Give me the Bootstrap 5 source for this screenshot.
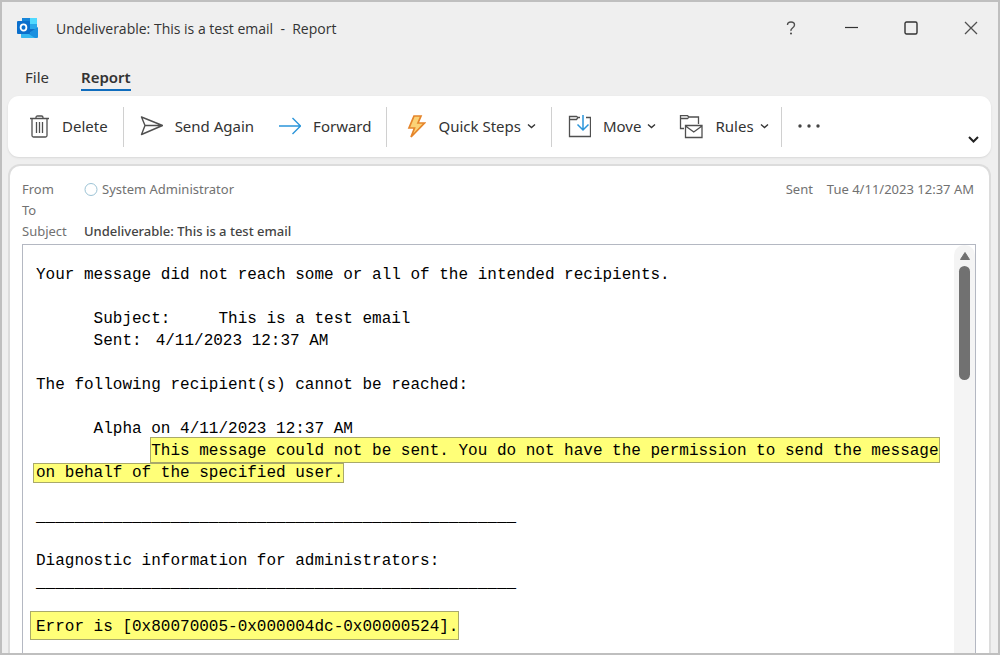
<!DOCTYPE html>
<html lang="en">
<head>
<meta charset="utf-8">
<meta name="viewport" content="width=device-width, initial-scale=1">
<title>Undeliverable: This is a test email - Report</title>
<link href="https://cdn.jsdelivr.net/npm/bootstrap@5.3.0/dist/css/bootstrap.min.css" rel="stylesheet">
<style>
body { font-family: "Noto Sans", "Open Sans", sans-serif; font-size: 15px; color: #333; background: #efefef; }
button { border: 0; background: none; padding: 0; color: inherit; white-space: nowrap; }
svg { display: block; flex: none; fill: none; stroke: #505050; }
.app-window { border: 2px solid #bfbfbf; height: 100vh; min-height: 400px; overflow: hidden; }
.title-bar { height: 52px; padding: 0 11px 0 15px; }
.title-text { font-family: "Open Sans", sans-serif; font-size: 14px; white-space: pre; padding-left: 17px; }
.win-btns { margin-right: -14px; }
.win-btn { width: 60px; height: 40px; }
.menu-tabs { height: 42px; padding: 10px 23px 0; gap: 32px; }
.menu-tabs a { color: #333; text-decoration: none; height: 27px; line-height: 26px; }
.menu-tabs a.current { border-bottom: 2px solid #0f6cbd; font-weight: 600; }
.ribbon { background: #fff; border-radius: 11px; height: 61px; margin: 0 7px 0 6px; padding: 0 11px 0 5px; box-shadow: 0 1px 2px #d8d8d8; }
.ribbon button { height: 40px; margin: 0 15px; gap: 12px; }
.ribbon button + button { margin-left: 8px; }
.ribbon .divider { width: 1px; height: 40px; background: #d0d0d0; flex: none; }
.ribbon .divider:last-of-type { margin-left: -3px; }
.ribbon .expand { height: 24px; margin: 24px 0 0 auto; }
.caret { margin-left: -6px; }
.report { background: #fff; border: 2px solid #dcdcdc; border-bottom: 0; border-radius: 12px 12px 0 0; margin: 7px 7px 0 6px; padding: 13px 13px 0 12px; min-height: 0; }
.headers { font-size: 13px; line-height: 21px; color: #717171; margin: 0 0 2px; }
.headers dt { width: 62px; font-weight: 400; }
.headers dd { margin: 0; }
.headers .topic { color: #444; font-weight: 500; }
.sent-date { margin: 0 2px 0 14px; }
.message-box { border: 1px solid #b4b8c2; border-bottom: 0; min-height: 0; }
.message { font-family: "Liberation Mono", monospace; font-size: 16px; line-height: 22px; color: #000; margin: 0; padding: 19px 0 0 13px; overflow: hidden; tab-size: 6; min-width: 0; }
.message .field-name { margin-right: 14px; }
.hl { background: #ffff78; box-shadow: 0 0 0 1px #a9a96a; padding: 4px 0 2px; }
.hl-second { padding: 0 0 0 2px; margin-left: -2px; }
.hl-error { padding: 6px 0 3px 5px; margin-left: -5px; }
.scroll-track { width: 21px; flex: none; background: #f4f4f4; border-radius: 10px 10px 0 0; padding-top: 5px; }
.scroll-thumb { width: 11px; height: 114px; border-radius: 6px; background: #717171; margin-top: 5px; }
</style>
</head>
<body>
<div class="app-window d-flex flex-column">
  <header class="title-bar d-flex align-items-center flex-shrink-0">
    <svg width="22" height="22" viewBox="0 0 22 22" style="stroke:none">
      <path d="M5 1h15v13H5z" fill="#1490df"/><path d="M5 1h8v6H5z" fill="#1686d9"/><path d="M13 1h7v6h-7z" fill="#50d9ff"/><path d="M13 7h7v5h-7z" fill="#28a8ea"/>
      <path d="M13 12h7v3h-7z" fill="#0f6fc6"/><path d="M4 21l17-11v10q0 1-1 1z" fill="#1b90e0"/><path d="M4 12l14 9H5q-1 0-1-1z" fill="#35b8f1"/>
      <rect y="4" width="13" height="13" rx="1" fill="#0a6fcc"/><ellipse cx="6.500" cy="10.500" rx="2.900" ry="3.200" fill="none" stroke="#fff" stroke-width="1.800"/>
    </svg>
    <span class="title-text">Undeliverable: This is a test email  -  Report</span>
    <div class="win-btns ms-auto d-flex">
      <button class="win-btn d-flex align-items-center justify-content-center" aria-label="Help"><svg width="14" height="16" viewBox="0 0 14 16"><path d="M3.500 5Q3.500 2 7 2t3.500 3Q10.500 6.500 8.500 8T7 11" stroke-width="1.400"/><circle cx="7" cy="13.500" r="1" fill="#444" stroke="none"/></svg></button>
      <button class="win-btn d-flex align-items-center justify-content-center" aria-label="Minimize"><svg width="14" height="14" viewBox="0 0 14 14"><path d="M1 6.500h13" stroke="#333" stroke-width="1.200"/></svg></button>
      <button class="win-btn d-flex align-items-center justify-content-center" aria-label="Maximize"><svg width="14" height="14" viewBox="0 0 14 14"><rect x="1" y="1" width="12" height="12" rx="1.500" stroke="#333" stroke-width="1.400"/></svg></button>
      <button class="win-btn d-flex align-items-center justify-content-center" aria-label="Close"><svg width="14" height="14" viewBox="0 0 14 14"><path d="M1 1l12 12M13 1L1 13" stroke-width="1.300"/></svg></button>
    </div>
  </header>
  <nav class="menu-tabs d-flex flex-shrink-0">
    <a href="#">File</a>
    <a href="#" class="current">Report</a>
  </nav>
  <div class="ribbon d-flex align-items-center flex-shrink-0">
    <button class="d-flex align-items-center"><svg width="22" height="24" viewBox="0 0 22 24"><path d="M2 3.500h19M4 3.500v17q0 1.500 1.500 1.500h12q1.500 0 1.500-1.500v-17M8 3.500V2.500q0-1.500 1.500-1.500h4Q15 1 15 2.500v1M8.500 7v11M11.500 7v11M14.500 7v11" stroke-width="1.300"/></svg>Delete</button>
    <div class="divider"></div>
    <button class="d-flex align-items-center"><svg width="24" height="22" viewBox="0 0 24 22"><path d="M2.500 1L23.500 9.500 2.500 18.500 6 9.500zM6 9.500h17" stroke-width="1.400" stroke-linejoin="round"/></svg>Send Again</button>
    <button class="d-flex align-items-center"><svg width="24" height="20" viewBox="0 0 24 20"><path d="M2 9h22M15.500 1l8 8-8 8" stroke="#2b95da" stroke-width="1.400"/></svg>Forward</button>
    <div class="divider"></div>
    <button class="d-flex align-items-center"><svg width="24" height="24" viewBox="0 0 24 24"><path d="M12 1h7L16 8h6.500L9 22 12.500 13H7z" fill="#fbd276" stroke="#e5852b" stroke-width="1.700"/></svg>Quick Steps<svg class="caret" width="9" height="12" viewBox="0 0 9 12"><path d="M1 3.500l3.500 3L8 3.500" stroke="#333" stroke-width="1.400"/></svg></button>
    <div class="divider"></div>
    <button class="d-flex align-items-center"><svg width="24" height="24" viewBox="0 0 24 24"><path d="M13 2.500h-2L9.500 4.500H2.500v17h21v-19H19M2.500 4.500v-3h7L11 2.500" stroke-width="1.300"/><path d="M16 0v15M10.500 9.500l5.500 5.500 5.500-5.500" stroke="#2b95da" stroke-width="1.500"/></svg>Move<svg class="caret" width="9" height="12" viewBox="0 0 9 12"><path d="M1 3.500l3.500 3L8 3.500" stroke="#333" stroke-width="1.400"/></svg></button>
    <button class="d-flex align-items-center"><svg width="24" height="24" viewBox="0 0 24 24"><path d="M5 13.500H1.500V.7h7L10 2h9.500v7M1.500 3.500h7L10 2M6.500 10.500h16.500v12H6.500zM6.500 11l8.250 6L23 11" stroke-width="1.300"/></svg>Rules<svg class="caret" width="9" height="12" viewBox="0 0 9 12"><path d="M1 3.500l3.500 3L8 3.500" stroke="#333" stroke-width="1.400"/></svg></button>
    <div class="divider"></div>
    <button aria-label="More commands"><svg width="24" height="6" viewBox="0 0 24 6"><g fill="#444" stroke="none"><circle cx="3" cy="2" r="1.700"/><circle cx="12" cy="2" r="1.700"/><circle cx="21" cy="2" r="1.700"/></g></svg></button>
    <button class="expand" aria-label="Expand ribbon"><svg width="13" height="12" viewBox="0 0 13 12"><path d="M2 4L6.500 8.500 11 4" stroke="#222" stroke-width="2"/></svg></button>
  </div>
  <main class="report d-flex flex-column flex-grow-1">
    <div class="d-flex flex-shrink-0 justify-content-between">
      <dl class="headers">
        <div class="d-flex"><dt>From</dt><dd class="d-flex align-items-center"><svg class="me-1" width="14" height="14" viewBox="0 0 14 14"><circle cx="7" cy="6.500" r="6" stroke="#9cc3d5"/></svg>System Administrator</dd></div>
        <div class="d-flex"><dt>To</dt><dd></dd></div>
        <div class="d-flex"><dt>Subject</dt><dd class="topic">Undeliverable: This is a test email</dd></div>
      </dl>
      <div class="headers">Sent<span class="sent-date">Tue 4/11/2023 12:37 AM</span></div>
    </div>
    <div class="message-box d-flex flex-grow-1">
      <pre class="message flex-grow-1">Your message did not reach some or all of the intended recipients.

	Subject:     This is a test email
	<span class="field-name">Sent:</span>4/11/2023 12:37 AM

The following recipient(s) cannot be reached:

	Alpha on 4/11/2023 12:37 AM
		<span class="hl">This message could not be sent. You do not have the permission to send the message</span>
<span class="hl hl-second">on behalf of the specified user.</span>

__________________________________________________

Diagnostic information for administrators:
__________________________________________________

<span class="hl hl-error">Error is [0x80070005-0x000004dc-0x00000524].</span></pre>
      <div class="scroll-track d-flex flex-column align-items-center">
        <svg width="12" height="11" viewBox="0 0 12 11"><path d="M6 2.500L10.500 9.500h-9z" fill="#717171" stroke="#717171" stroke-linejoin="round"/></svg>
        <div class="scroll-thumb"></div>
      </div>
    </div>
  </main>
</div>
<script src="https://cdn.jsdelivr.net/npm/bootstrap@5.3.0/dist/js/bootstrap.bundle.min.js"></script>
</body>
</html>
